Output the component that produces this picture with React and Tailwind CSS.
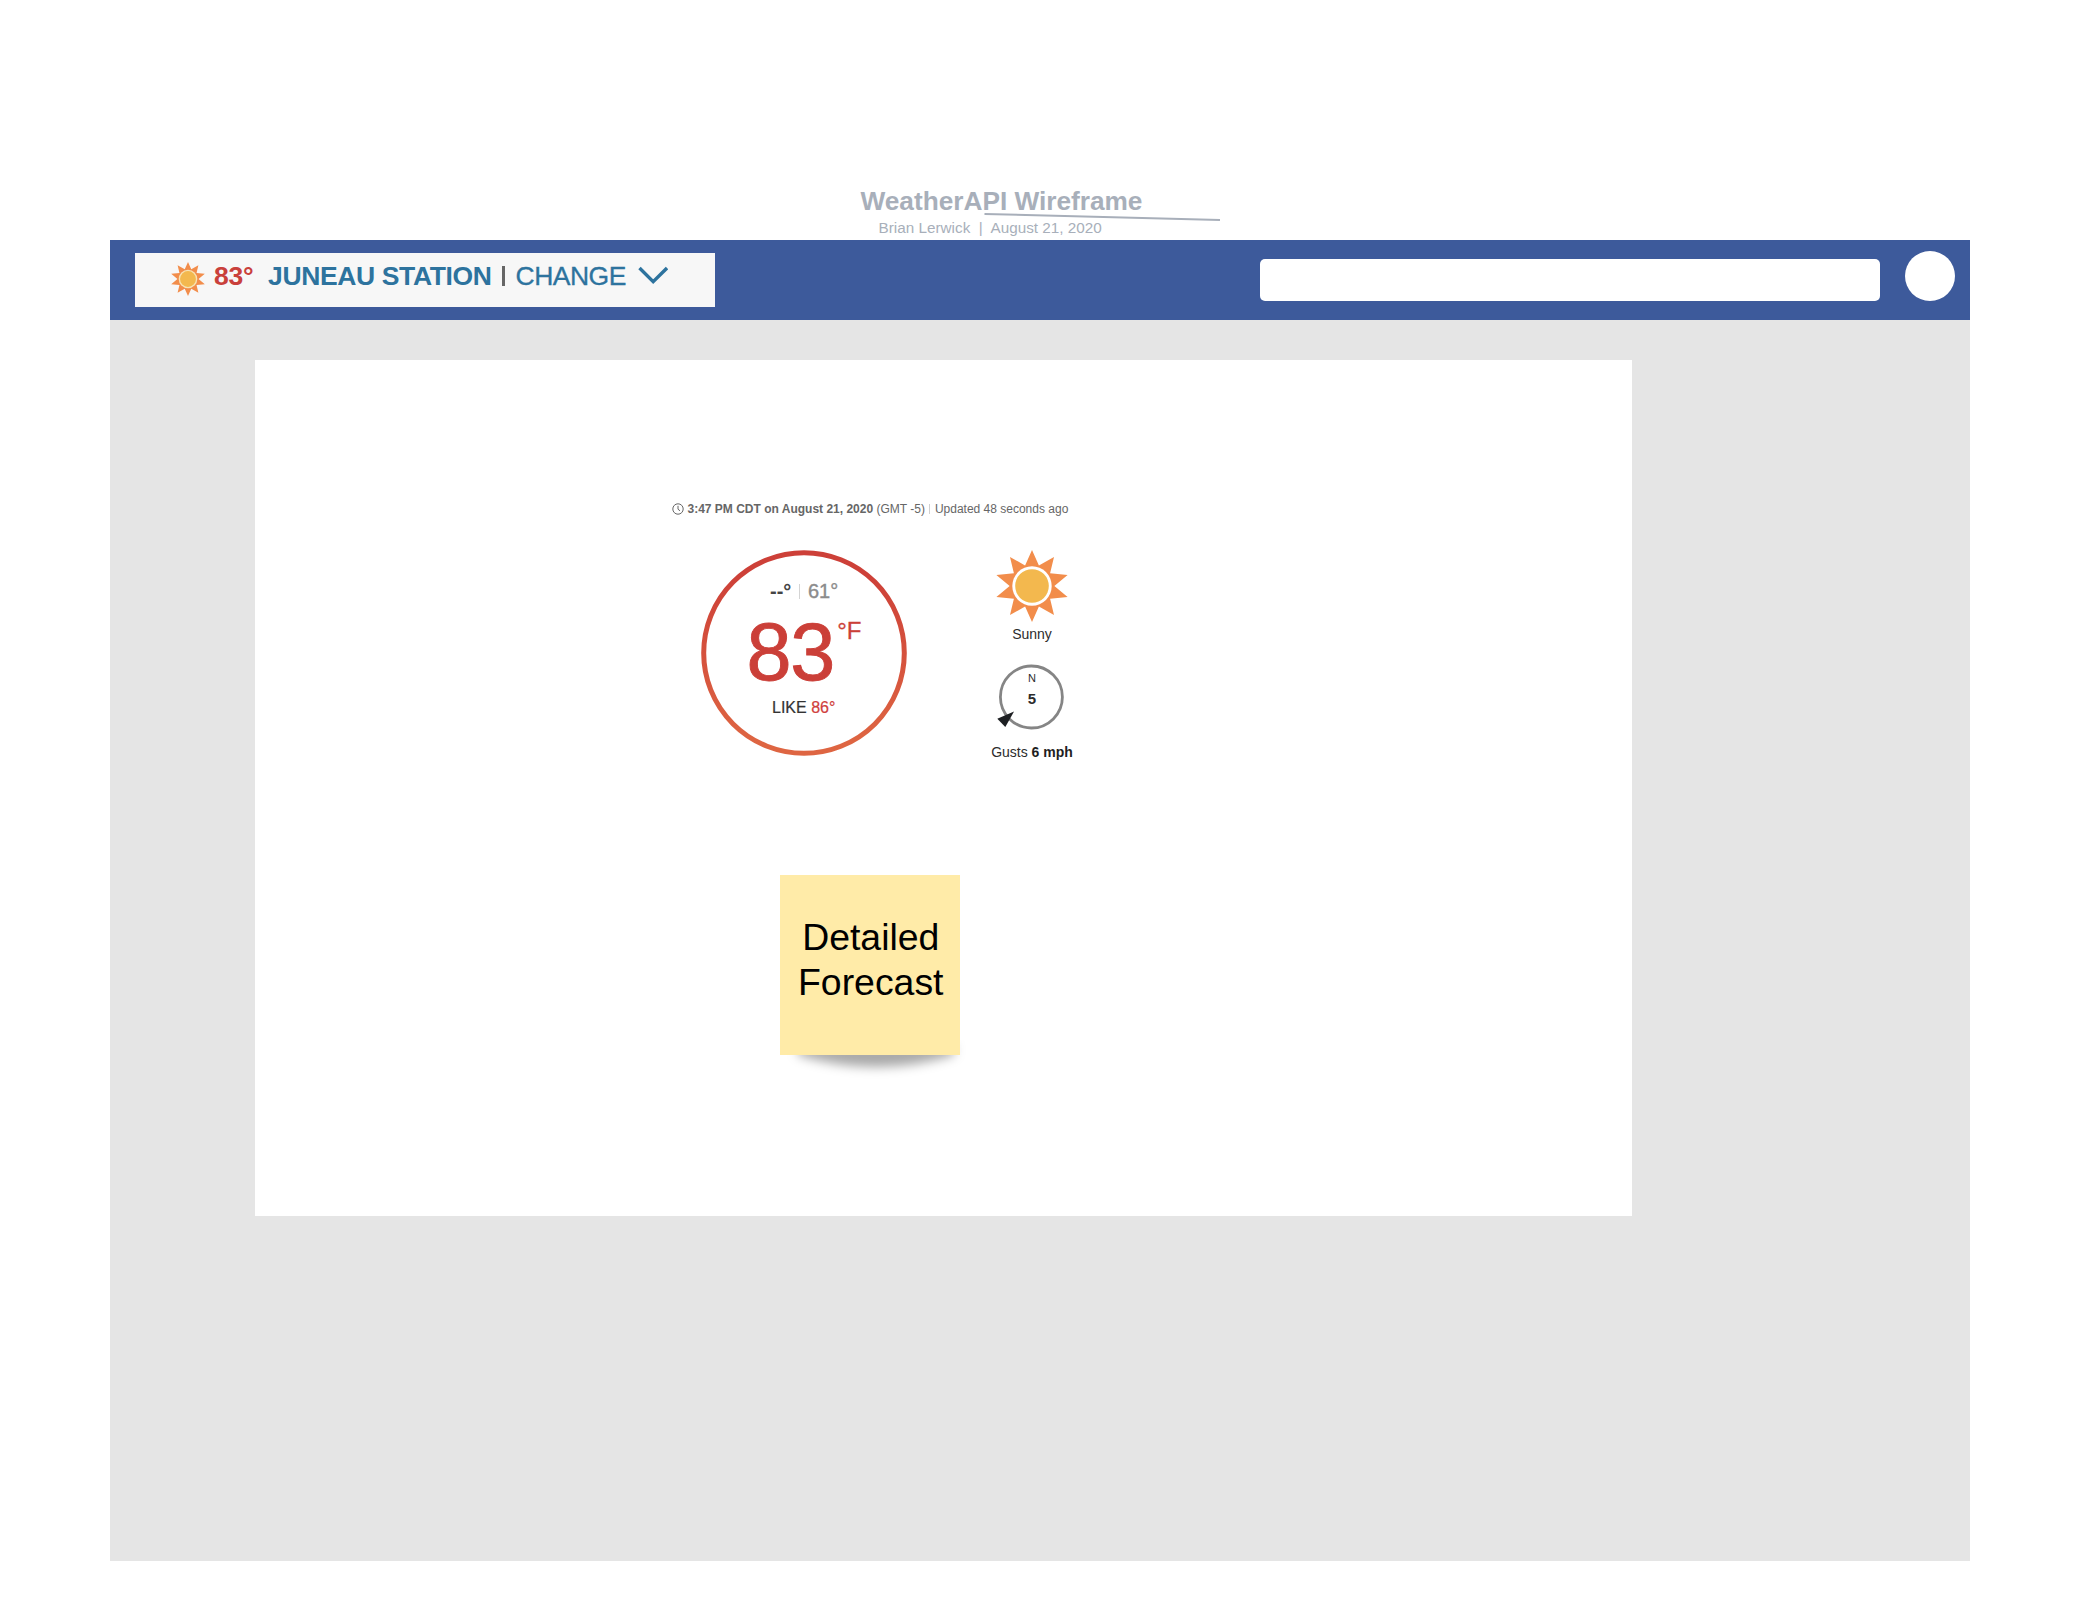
const starPoints = Array.from({ length: 20 }, (_, i) => {
  const r = i % 2 === 0 ? 36 : 21.5;
  const a = (i * Math.PI) / 10;
  return `${(36 + r * 1.04 * Math.sin(a)).toFixed(2)},${(36 - r * Math.cos(a)).toFixed(2)}`;
}).join(" ");

function Sun({ className, halo = "#ffffff" }) {
  return (
    <svg className={className} viewBox="0 0 72 72" aria-hidden="true">
      <polygon points={starPoints} fill="#f28d4b" />
      <circle cx="36" cy="36" r="19.7" fill={halo} />
      <circle cx="36" cy="36" r="16.8" fill="#f3b84e" />
    </svg>
  );
}

function DocumentTitle() {
  return (
    <header className="relative h-[240px] pt-[186px] text-[#a8afba]">
      <h1 className="ml-[860.5px] text-[26.25px] leading-[30px] font-bold tracking-[-0.02px] whitespace-pre">WeatherAPI Wireframe</h1>
      <p className="mt-[3px] ml-[878.5px] text-[15.25px] leading-[18px] tracking-[0.02px] whitespace-pre">
        {"Brian Lerwick  |  August 21, 2020"}
      </p>
      <svg className="absolute left-[984px] top-[212px] h-[10px] w-[237px]" viewBox="0 0 237 10" aria-hidden="true">
        <path d="M0.5 2L236 8" stroke="#a8afba" strokeWidth="2" />
      </svg>
    </header>
  );
}

function StationBar() {
  return (
    <nav className="flex h-20 bg-[#3d5a9b]">
      <div className="mt-[13px] ml-[25px] flex h-[54px] w-[580px] shrink-0 items-start bg-[#f7f7f7] text-[26.5px] leading-[47px] text-[#2d739e]">
        <Sun className="mt-[8.5px] ml-[36px] h-[34px] w-[34px] shrink-0" halo="#f7e3b4" />
        <span className="ml-[9px] w-[54px] shrink-0 font-bold tracking-[-0.3px] text-[#c9403b]">83°</span>
        <span className="w-[234px] shrink-0 font-bold tracking-[-0.36px] whitespace-nowrap">JUNEAU STATION</span>
        <span className="mt-[13px] h-5 w-[2.5px] shrink-0 bg-[#666666]" />
        <span className="ml-[11px] w-[122px] shrink-0 tracking-[-0.5px] [-webkit-text-stroke:0.3px_#2d739e]">CHANGE</span>
        <svg className="mt-[13px] h-5 w-[30px] shrink-0" viewBox="0 0 30 20" fill="none" aria-hidden="true">
          <path d="M1.5 2L15.2 15.6L29 2" stroke="#2d739e" strokeWidth="3.4" />
        </svg>
      </div>
      <div className="mt-[18.7px] ml-[545px] h-[42.3px] w-[620px] shrink-0 rounded-[5px] bg-white" />
      <div className="mt-[11px] ml-[25px] h-[50px] w-[50px] shrink-0 rounded-full bg-white" />
    </nav>
  );
}

function TimeRow() {
  return (
    <div className="ml-[416.5px] flex h-4 items-start text-xs leading-4 text-[#666666] whitespace-pre">
      <svg className="mt-[1.5px] h-3 w-3 shrink-0" viewBox="0 0 12 12" fill="none" stroke="#666666" aria-hidden="true">
        <circle cx="6" cy="6" r="5.2" />
        <path d="M6 2.8V6.2L8 7.8" />
      </svg>
      <span className="ml-[4px]">
        <b>3:47 PM CDT on August 21, 2020</b>
        {" (GMT -5)"}
      </span>
      <span className="mt-[3px] ml-[4px] h-2.5 w-px bg-[#d0d0d0]" />
      <span className="ml-[5px]">Updated 48 seconds ago</span>
    </div>
  );
}

function TemperatureRing() {
  return (
    <div className="relative h-[206px] w-[206px] shrink-0 pt-[30px]">
      <svg className="absolute inset-0 h-full w-full" viewBox="0 0 206 206" fill="none" aria-hidden="true">
        <defs>
          <linearGradient id="heat" x1="0" y1="0" x2="0" y2="1">
            <stop offset="0.1" stopColor="#cd4038" />
            <stop offset="0.95" stopColor="#de6542" />
          </linearGradient>
        </defs>
        <circle cx="103" cy="103" r="100.3" stroke="url(#heat)" strokeWidth="5" />
      </svg>
      <div className="ml-[69px] flex h-[22px] text-xl leading-[22px]">
        <span className="w-[28.5px] font-bold text-[#444444]">--°</span>
        <span className="mt-[4px] h-[15px] w-[1.5px] bg-[#d4d4d4]" />
        <span className="ml-[8px] text-[#8c8c8c] [-webkit-text-stroke:0.4px_#8c8c8c]">61°</span>
      </div>
      <div className="mt-[9px] ml-[45.5px] flex h-[82px] items-start text-[#cb3f38]">
        <span className="w-[90.7px] text-[81px] leading-[82px] tracking-[-1.2px] [-webkit-text-stroke:0.9px_#cb3f38]">83</span>
        <span className="mt-1.5 text-2xl leading-[27px] [-webkit-text-stroke:0.3px_#cb3f38]">°F</span>
      </div>
      <p className="mt-1.5 ml-[71px] text-base leading-[17px] whitespace-pre text-[#333333] [-webkit-text-stroke:0.2px]">
        LIKE <span className="text-[#d0403c]">86°</span>
      </p>
    </div>
  );
}

function Conditions() {
  return (
    <div className="ml-[65px] flex w-[120px] flex-col items-center text-sm leading-4 text-[#2c2c2c]">
      <Sun className="h-[72px] w-[72px] overflow-visible" />
      <p className="mt-1">Sunny</p>
      <div className="relative mt-[22px] flex h-[66px] w-[66px] flex-col items-center pt-2">
        <svg className="absolute inset-0 h-full w-full overflow-visible" viewBox="0 0 66 66" fill="none" aria-hidden="true">
          <circle cx="32.4" cy="33" r="31" stroke="#858585" strokeWidth="2.8" />
          <path d="M15 47.5L-1.7 54.7L6.3 63Z" fill="#1d1f22" />
        </svg>
        <span className="text-[11px] leading-3">N</span>
        <span className="mt-[6px] text-[15px] font-bold leading-[17px]">5</span>
      </div>
      <p className="mt-3.5 whitespace-nowrap">
        Gusts <b className="text-[#1f1f1f]">6 mph</b>
      </p>
    </div>
  );
}

function StickyNote() {
  return (
    <div className="relative mt-[115px] ml-[525px] h-[180px] w-[180px]">
      <svg className="absolute left-0 top-[165px] h-[45px] w-[195px]" viewBox="0 0 195 45" aria-hidden="true">
        <defs>
          <filter id="soft" x="-20%" y="-60%" width="140%" height="220%">
            <feGaussianBlur stdDeviation="5.5" />
          </filter>
        </defs>
        <path d="M18 5H174V15Q96 39 18 15Z" fill="#000000" fillOpacity="0.34" filter="url(#soft)" />
      </svg>
      <div className="relative h-full w-full bg-[#ffeba8] pt-[39.5px] pl-[1.5px] text-center text-[37.4px] leading-[45px] text-black">
        Detailed
        <br />
        Forecast
      </div>
    </div>
  );
}

export default function App() {
  return (
    <div className="h-[1600px] w-[2080px] overflow-hidden bg-white font-['Liberation_Sans',Arial,sans-serif]">
      <DocumentTitle />
      <div className="ml-[110px] h-[1321px] w-[1860px] bg-[#e5e5e5]">
        <StationBar />
        <main className="mt-10 ml-[145px] h-[856px] w-[1377px] bg-white pt-[141px]">
          <TimeRow />
          <div className="mt-[33px] ml-[446px] flex h-[210px]">
            <TemperatureRing />
            <Conditions />
          </div>
          <StickyNote />
        </main>
      </div>
    </div>
  );
}
